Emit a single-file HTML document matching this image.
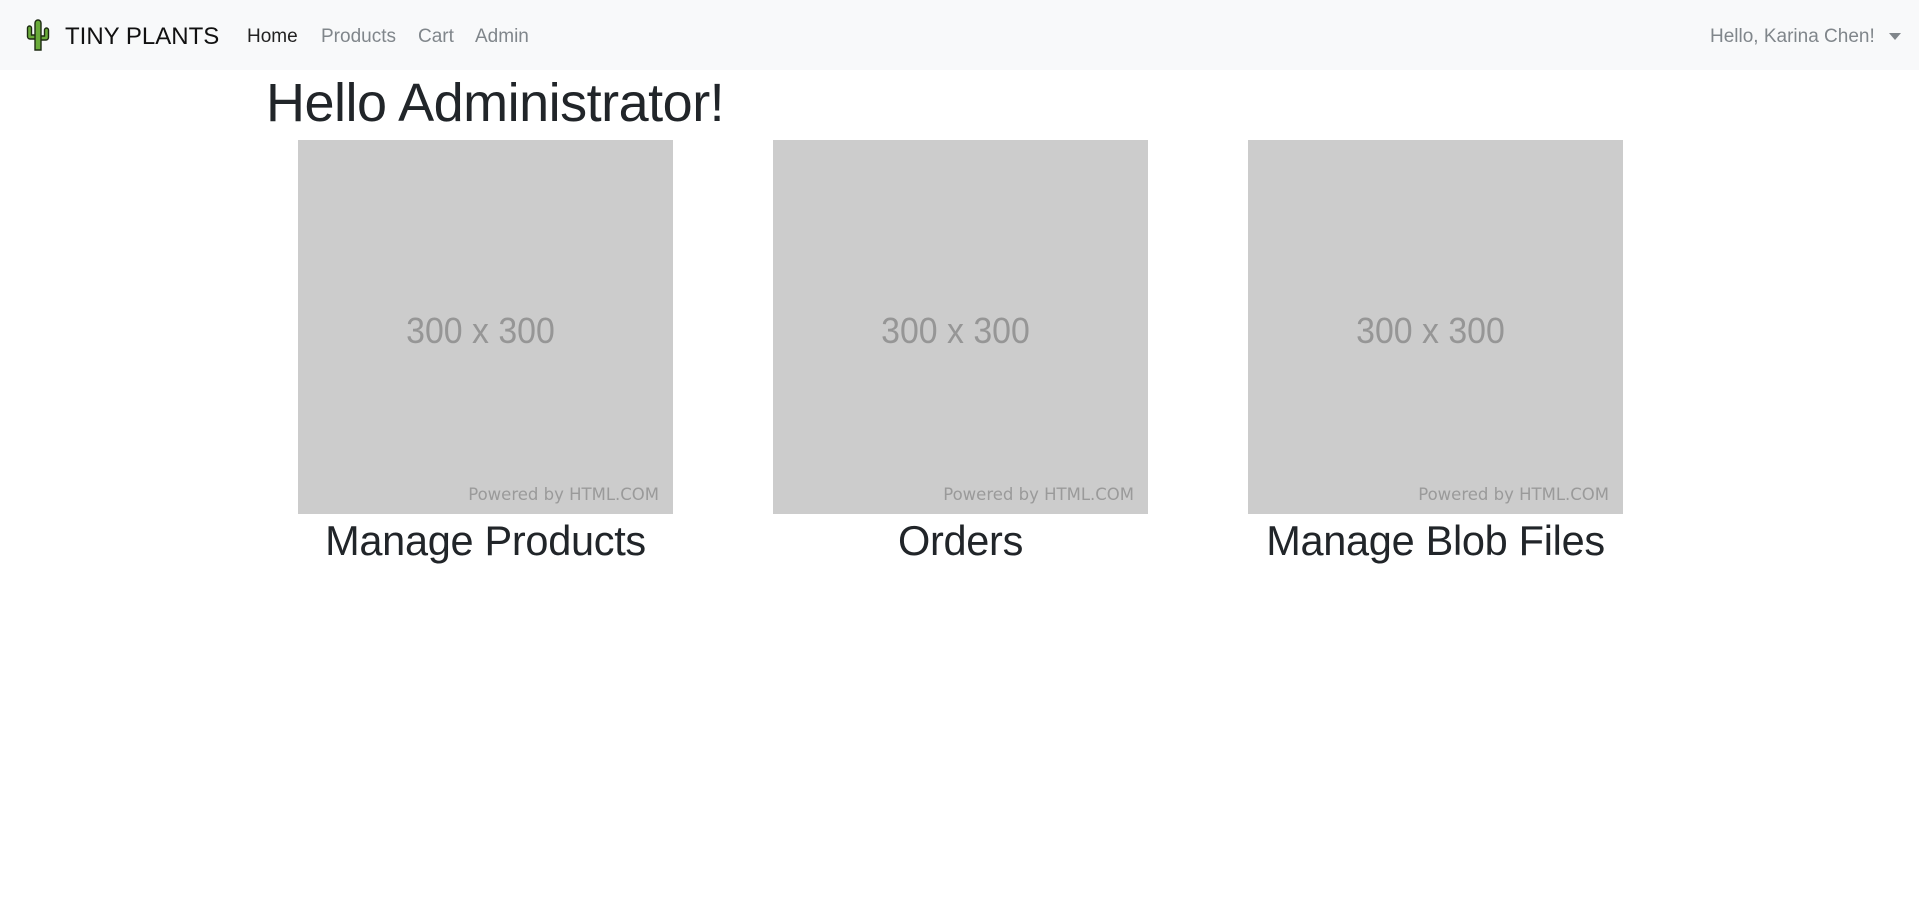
<!DOCTYPE html>
<html><head><meta charset="utf-8"><style>
body{margin:0;width:1919px;height:915px;background:#fff;font-family:"Liberation Sans",sans-serif;color:#212529;position:relative;overflow:hidden}
.nav{position:absolute;left:0;top:0;width:1919px;height:70px;background:#f8f9fa}
.t{position:absolute;white-space:nowrap}
.img{position:absolute;top:140px;width:375px;height:374px;background:#cccccc}
.img .n{position:absolute;left:-10px;right:0;top:170px;text-align:center;font-size:36px;color:#969696;transform:scaleX(0.94)}
.img .p{position:absolute;right:14px;top:345px;font-family:"DejaVu Sans",sans-serif;font-size:16.5px;color:#9a9a9a}
.cap{position:absolute;top:517px;width:475px;text-align:center;font-size:41.5px;letter-spacing:-0.3px}
</style></head><body>
<div class="nav">
<svg style="position:absolute;left:24px;top:19px" width="28" height="32" viewBox="0 0 28 32"><path d="M11 31V4a3 3 0 0 1 6 0v27z M11 20H6a2.5 2.5 0 0 1-2.5-2.5V9a2 2 0 0 1 4 0v7H11z M17 17h3.5v-6a2 2 0 0 1 4 0v7.5A2.5 2.5 0 0 1 22 21h-5z" fill="#6aab3a" stroke="#1d2a12" stroke-width="1.4"/></svg>
<div class="t" style="left:65px;top:23px;font-size:24px;color:#111">TINY PLANTS</div>
<div class="t" style="left:247px;top:26px;font-size:19px;color:#222">Home</div>
<div class="t" style="left:321px;top:26px;font-size:19px;color:#80868b">Products</div>
<div class="t" style="left:418px;top:26px;font-size:19px;color:#80868b">Cart</div>
<div class="t" style="left:475px;top:26px;font-size:19px;color:#80868b">Admin</div>
<div class="t" style="left:1710px;top:26px;font-size:19px;color:#80868b">Hello, Karina Chen!</div>
<div class="t" style="left:1889px;top:33px;width:0;height:0;border-left:6px solid transparent;border-right:6px solid transparent;border-top:7px solid #80868b"></div>
</div>
<div class="t" style="left:266px;top:72px;font-size:54px;letter-spacing:-0.5px">Hello Administrator!</div>
<div class="img" style="left:298px"><div class="n">300 x 300</div><div class="p">Powered by HTML.COM</div></div>
<div class="img" style="left:773px"><div class="n">300 x 300</div><div class="p">Powered by HTML.COM</div></div>
<div class="img" style="left:1248px"><div class="n">300 x 300</div><div class="p">Powered by HTML.COM</div></div>
<div class="cap" style="left:248px">Manage Products</div>
<div class="cap" style="left:723px">Orders</div>
<div class="cap" style="left:1198px">Manage Blob Files</div>
</body></html>
